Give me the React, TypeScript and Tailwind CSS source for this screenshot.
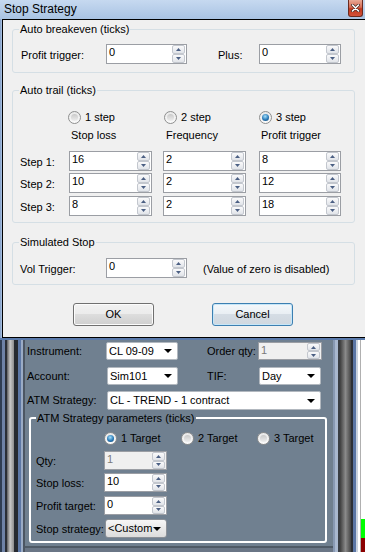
import React from 'react';

function SpinBtn({ up }: { up?: boolean }) {
  return (
    <div className="flex h-[9px] w-[13px] items-center justify-center rounded-[2px] border border-[#c3c7ce] bg-[linear-gradient(to_bottom,#fafafb,#e1e4e9)]">
      <svg width="5" height="3" viewBox="0 0 5 3">
        <path d={up ? 'M2.5 0L5 3H0z' : 'M0 0h5L2.5 3z'} fill="#4b5f83" />
      </svg>
    </div>
  );
}

function NumBox({ value, className = '', disabled }: { value: string; className?: string; disabled?: boolean }) {
  return (
    <div
      className={`flex items-stretch justify-between border border-[#9b9ea4] ${
        disabled ? 'bg-[#f0f0f0] text-[#7a7a7a]' : 'bg-white text-black'
      } ${className}`}
    >
      <span className="pl-[2px] leading-[15px]">{value}</span>
      <div className="mr-[1px] flex flex-col justify-center">
        <SpinBtn up />
        <SpinBtn />
      </div>
    </div>
  );
}

function Radio({ checked, label }: { checked?: boolean; label: string }) {
  return (
    <div className="flex items-center gap-[4px]">
      <span className="flex h-[13px] w-[13px] items-center justify-center rounded-full border border-[#8e8f8f] bg-[linear-gradient(to_bottom,#e8e8e8,#fbfbfb)]">
        {checked ? (
          <span className="h-[7px] w-[7px] rounded-full bg-[radial-gradient(circle_at_45%_35%,#a5e0fb,#2a7ab8_55%,#0c3c68)]" />
        ) : (
          <span className="h-[7px] w-[7px] rounded-full bg-[linear-gradient(to_bottom,#c9c9c9,#eeeeee)]" />
        )}
      </span>
      <span>{label}</span>
    </div>
  );
}

function Group({ title, className = '', children }: { title: string; className?: string; children: React.ReactNode }) {
  return (
    <fieldset className={`rounded-[3px] border border-[#d5dfe5] ${className}`}>
      <legend className="ml-[6px] px-[1px] leading-[14px]">{title}</legend>
      {children}
    </fieldset>
  );
}

function Combo({ text, className = '', button }: { text: string; className?: string; button?: boolean }) {
  return (
    <div
      className={`flex items-center justify-between ${
        button
          ? 'rounded-[3px] border border-[#8b9097] bg-[linear-gradient(to_bottom,#f6f6f6,#dcdcdc)]'
          : 'rounded-[2px] border border-[#b2b8bf] bg-white'
      } ${className}`}
    >
      <span className="pl-[2px]">{text}</span>
      <svg width="8" height="4" viewBox="0 0 8 4" className="mr-[5px]">
        <path d="M0 0h8L4 4z" fill="#000" />
      </svg>
    </div>
  );
}

function WinButton({ label, focused }: { label: string; focused?: boolean }) {
  return (
    <button
      className={`h-[23px] w-[81px] rounded-[3px] border ${
        focused
          ? 'border-[#3c7fb1] bg-[linear-gradient(to_bottom,#f4f8fb_0%,#e8eef3_50%,#d5dde5_50%,#cfd7df_100%)] shadow-[inset_0_0_0_1px_#c6e6f8]'
          : 'border-[#707070] bg-[linear-gradient(to_bottom,#f2f2f2_0%,#ebebeb_50%,#dddddd_50%,#cfcfcf_100%)] shadow-[inset_0_0_0_1px_#fcfcfc]'
      }`}
    >
      {label}
    </button>
  );
}

export default function App() {
  return (
    <div className="h-[552px] w-[365px] overflow-hidden bg-[#708090] font-['Liberation_Sans',Arial,sans-serif] text-[11px] text-black">
      {/* Stop Strategy dialog */}
      <div className="flex h-[338px] flex-col">
        <div className="flex h-[19px] items-start justify-between bg-[linear-gradient(to_bottom,#c6d9f0,#a9c3e3)]">
          <span className="pl-[4px] pt-[1px] text-[12px] leading-[16px]">Stop Strategy</span>
          <div className="mr-[2px] flex h-[17px] w-[15px] items-center justify-center rounded-b-[3px] border border-t-0 border-[#6b2b20] bg-[linear-gradient(to_bottom,#e9a996_0%,#d66c55_45%,#c0381d_55%,#d4523a_100%)]">
            <svg width="9" height="8" viewBox="0 0 9 8">
              <path d="M1.5 1l6 6M7.5 1l-6 6" stroke="#4a2a25" strokeWidth="3" strokeLinecap="round" />
              <path d="M1.5 1l6 6M7.5 1l-6 6" stroke="#ffffff" strokeWidth="1.6" strokeLinecap="round" />
            </svg>
          </div>
        </div>
        <div className="flex flex-1">
          <div className="w-[2px] bg-[linear-gradient(to_right,#7f9bc4,#b1c8e6)]" />
          <div className="flex-1 border-y border-l border-black bg-[#f0f0f0] pl-[9px] pt-[2px]">
            <Group title="Auto breakeven (ticks)" className="w-[343px]">
              <div className="flex items-center pb-[8px] pl-[8px] pt-[8px]">
                <span className="w-[85px] pt-[2px]">Profit trigger:</span>
                <NumBox value="0" className="h-[20px] w-[81px]" />
                <span className="ml-[31px] w-[41px] pt-[2px]">Plus:</span>
                <NumBox value="0" className="h-[20px] w-[82px]" />
              </div>
            </Group>

            <Group title="Auto trail (ticks)" className="mt-[10px] w-[343px]">
              <div className="grid grid-cols-[49px_94px_96px_82px] items-center pb-[6px] pl-[7px] pt-[12px]">
                <span />
                <div className="-ml-[1px] h-[16px]">
                  <Radio label="1 step" />
                </div>
                <div className="ml-[1px] h-[16px]">
                  <Radio label="2 step" />
                </div>
                <div className="h-[16px]">
                  <Radio checked label="3 step" />
                </div>

                <span className="mt-[3px]" />
                <span className="mt-[3px] pl-[2px] leading-[14px]">Stop loss</span>
                <span className="mt-[3px] pl-[3px] leading-[14px]">Frequency</span>
                <span className="mt-[3px] pl-[2px] leading-[14px]">Profit trigger</span>

                <span className="mt-[11px]">Step 1:</span>
                <NumBox value="16" className="mt-[9px] h-[20px] w-[83px]" />
                <NumBox value="2" className="mt-[9px] h-[20px] w-[83px]" />
                <NumBox value="8" className="mt-[9px] h-[20px] w-[82px]" />

                <span className="mt-[4px]">Step 2:</span>
                <NumBox value="10" className="mt-[2px] h-[20px] w-[83px]" />
                <NumBox value="2" className="mt-[2px] h-[20px] w-[83px]" />
                <NumBox value="12" className="mt-[2px] h-[20px] w-[82px]" />

                <span className="mt-[5px]">Step 3:</span>
                <NumBox value="8" className="mt-[3px] h-[20px] w-[83px]" />
                <NumBox value="2" className="mt-[3px] h-[20px] w-[83px]" />
                <NumBox value="18" className="mt-[3px] h-[20px] w-[82px]" />
              </div>
            </Group>

            <Group title="Simulated Stop" className="mt-[12px] w-[343px]">
              <div className="flex items-center pb-[6px] pl-[7px] pt-[9px]">
                <span className="w-[86px] pt-[2px]">Vol Trigger:</span>
                <NumBox value="0" className="h-[20px] w-[81px]" />
                <span className="ml-[16px] pt-[2px]">(Value of zero is disabled)</span>
              </div>
            </Group>

            <div className="mt-[18px] flex">
              <div className="ml-[61px]">
                <WinButton label="OK" />
              </div>
              <div className="ml-[58px]">
                <WinButton label="Cancel" focused />
              </div>
            </div>
          </div>
        </div>
      </div>

      {/* Order entry window behind */}
      <div className="flex h-[214px] flex-col">
        <div className="h-[2px] bg-[#5a7aab]" />
        <div className="flex flex-1">
          <div className="flex w-[25px]">
            <div className="w-[2px] bg-[#2f3d52]" />
            <div className="w-[3px] bg-[#6e82a6]" />
            <div className="w-[2px] bg-[#2a2e35]" />
            <div className="w-[7px] bg-[linear-gradient(to_right,#5e5e5e,#c9c9c9_45%,#8c8c8c)]" />
            <div className="w-[4px] bg-[#262a30]" />
            <div className="w-[3px] bg-[#5d78a6]" />
            <div className="w-[2px] bg-[#9aabc5]" />
            <div className="w-[2px] bg-[#4c5663]" />
          </div>

          <div className="flex w-[308px] flex-col bg-[#708090]">
            <div className="flex-1 pt-[2px]">
              <div className="flex h-[18px] items-center pl-[2px]">
                <span className="w-[79px]">Instrument:</span>
                <Combo text="CL 09-09" className="h-[18px] w-[72px]" />
                <span className="ml-[29px] w-[51px]">Order qty:</span>
                <NumBox value="1" disabled className="h-[18px] w-[64px]" />
              </div>
              <div className="mt-[7px] flex h-[18px] items-center pl-[2px]">
                <span className="w-[80px]">Account:</span>
                <Combo text="Sim101" className="h-[18px] w-[71px]" />
                <span className="ml-[29px] w-[52px]">TIF:</span>
                <Combo text="Day" className="h-[18px] w-[62px]" />
              </div>
              <div className="mt-[6px] flex h-[19px] items-center pl-[2px]">
                <span className="w-[80px]">ATM Strategy:</span>
                <Combo text="CL - TREND - 1 contract" className="h-[19px] w-[214px]" />
              </div>

              <fieldset className="ml-[4px] mt-[1px] w-[298px] rounded-[3px] border-2 border-white">
                <legend className="ml-[5px] px-[1px] leading-[14px]">ATM Strategy parameters (ticks)</legend>
                <div className="grid grid-cols-[68px_77px_76px_auto] items-center pb-[3px] pl-[5px] pt-[5px]">
                  <span />
                  <div className="h-[16px]">
                    <Radio checked label="1 Target" />
                  </div>
                  <div className="h-[16px]">
                    <Radio label="2 Target" />
                  </div>
                  <div className="h-[16px]">
                    <Radio label="3 Target" />
                  </div>
                </div>
                <div className="flex flex-col pb-[3px] pl-[5px]">
                  <div className="mt-[2px] flex items-center">
                    <span className="w-[68px] pt-[2px]">Qty:</span>
                    <NumBox value="1" disabled className="h-[19px] w-[63px]" />
                  </div>
                  <div className="mt-[3px] flex items-center">
                    <span className="w-[68px] pt-[2px]">Stop loss:</span>
                    <NumBox value="10" className="h-[19px] w-[63px]" />
                  </div>
                  <div className="mt-[4px] flex items-center">
                    <span className="w-[68px] pt-[2px]">Profit target:</span>
                    <NumBox value="0" className="h-[19px] w-[63px]" />
                  </div>
                  <div className="mt-[4px] flex items-center">
                    <span className="w-[69px] pt-[2px]">Stop strategy:</span>
                    <Combo button text="<Custom" className="h-[19px] w-[62px]" />
                  </div>
                </div>
              </fieldset>
            </div>
            <div className="h-[6px] border-t-2 border-[#4f5a66] bg-[#6a7686]" />
          </div>

          <div className="flex w-[25px]">
            <div className="w-[2px] bg-[#8899b3]" />
            <div className="w-[3px] bg-[#a9b8cf]" />
            <div className="w-[2px] bg-[#3b3f45]" />
            <div className="w-[11px] bg-[linear-gradient(to_right,#3e3e3e,#8a8a8a_50%,#454545)]" />
            <div className="w-[2px] bg-[#2d3036]" />
            <div className="w-[3px] bg-[#5b76a5]" />
            <div className="w-[2px] bg-[#c9d2de]" />
          </div>

          <div className="flex w-[7px] flex-col bg-white pl-[2px]">
            <div className="flex-1 border-l border-[#b0b0b0]" />
            <div className="h-[19px] border-l border-[#b0b0b0] bg-[#00ff00]" />
            <div className="h-[14px] border-l border-[#b0b0b0] bg-[#8b0000]" />
          </div>
        </div>
      </div>
    </div>
  );
}
